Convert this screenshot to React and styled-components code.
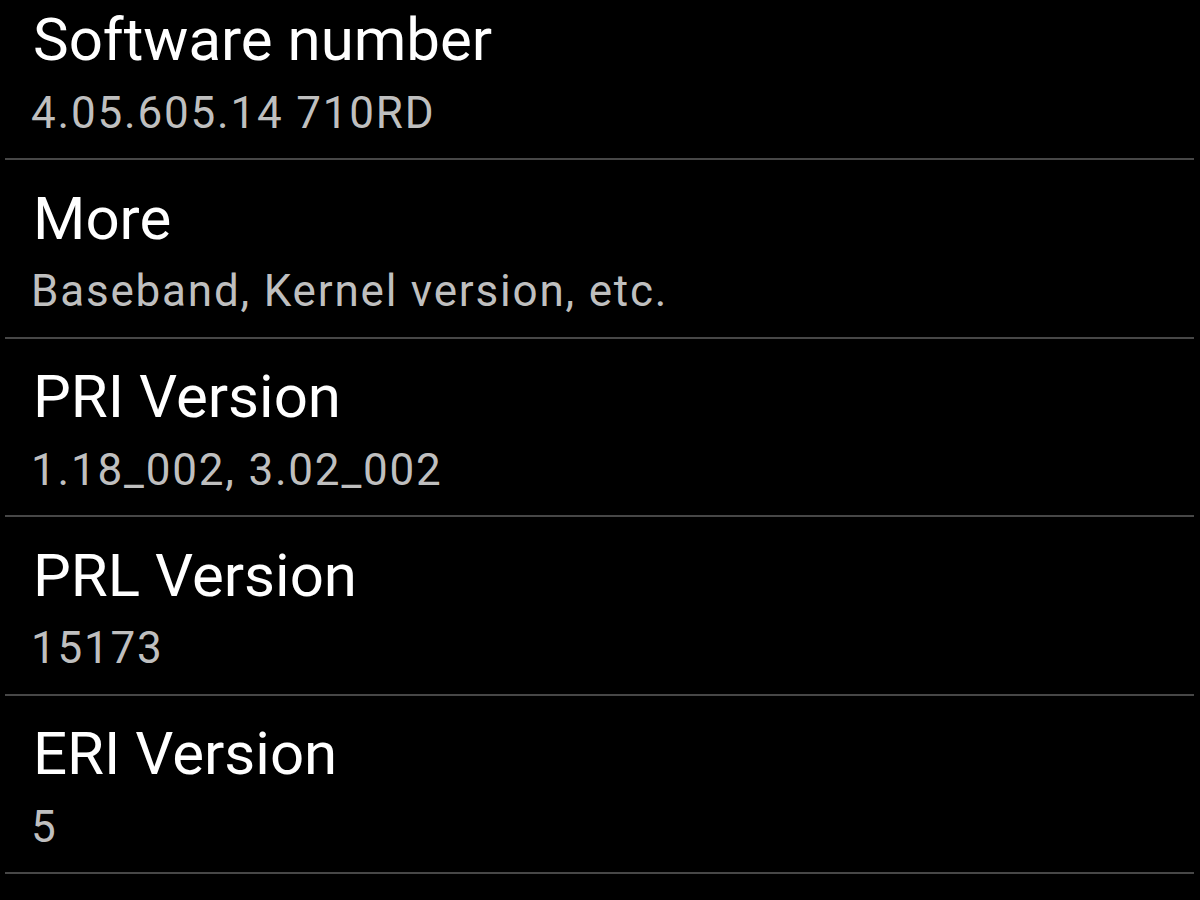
import React from "react";
import styled, { createGlobalStyle } from "styled-components";

const GlobalStyle = createGlobalStyle`
  html, body {
    margin: 0;
    padding: 0;
    background: #000;
  }
  body {
    font-family: Roboto, "Noto Sans", sans-serif;
    overflow: hidden;
  }
`;

const Screen = styled.div`
  width: 1200px;
  height: 900px;
  overflow: hidden;
  background: #000;
`;

const List = styled.ul`
  list-style: none;
  margin: -18.5px 6px 0 5px;
  padding: 0;
`;

const Row = styled.li`
  height: 178.5px;
  padding: 23.5px 0 0 28px;
  box-sizing: border-box;
  border-bottom: 2px solid #474747;
  display: flex;
  flex-direction: column;
`;

const Title = styled.div`
  color: #fff;
  font-size: 60px;
  line-height: 70px;
  white-space: nowrap;
`;

const Summary = styled.div`
  color: #bfbfbf;
  font-size: 44px;
  line-height: 52px;
  letter-spacing: 1.8px;
  margin-top: 11.5px;
  margin-left: -2px;
  white-space: nowrap;
`;

const items = [
  { title: "Software number", summary: "4.05.605.14 710RD" },
  { title: "More", summary: "Baseband, Kernel version, etc." },
  { title: "PRI Version", summary: "1.18_002, 3.02_002" },
  { title: "PRL Version", summary: "15173" },
  { title: "ERI Version", summary: "5" },
];

export default function App() {
  return (
    <>
      <GlobalStyle />
      <Screen>
        <List>
          {items.map((item) => (
            <Row key={item.title}>
              <Title>{item.title}</Title>
              <Summary>{item.summary}</Summary>
            </Row>
          ))}
        </List>
      </Screen>
    </>
  );
}
